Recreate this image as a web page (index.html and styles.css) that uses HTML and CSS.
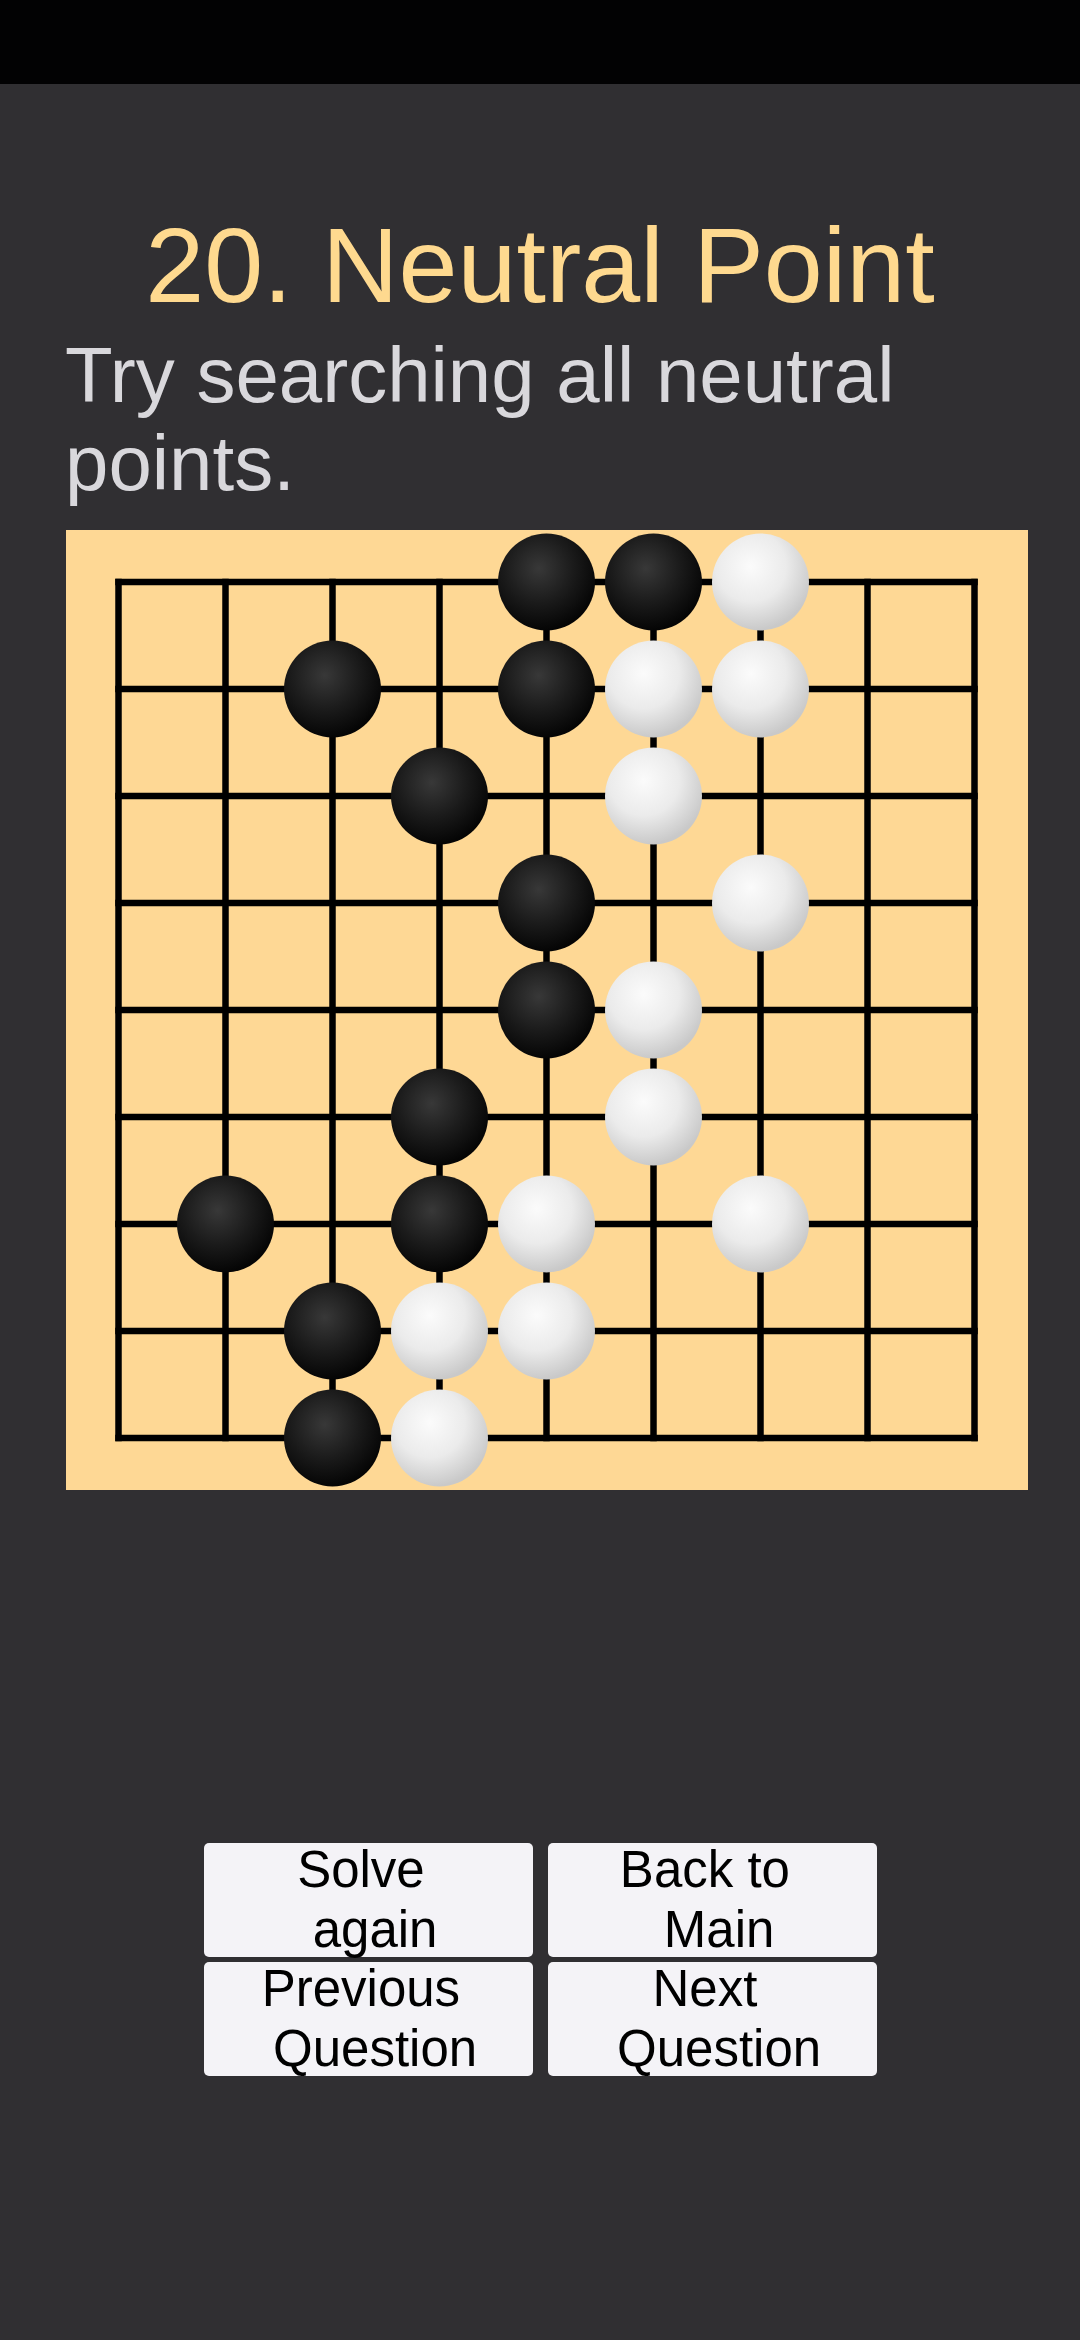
FILE: index.html
```html
<!DOCTYPE html>
<html lang="en">
<head>
<meta charset="utf-8">
<title>20. Neutral Point</title>
<link rel="stylesheet" href="styles.css">
</head>
<body>
<div class="statusbar"></div>
<main class="screen">
  <h1 class="title">20. Neutral Point</h1>
  <p class="desc">Try searching all neutral points.</p>
  <div class="board">
    <svg class="board-svg" viewBox="0 0 962 960" width="962" height="960" xmlns="http://www.w3.org/2000/svg">
      <defs>
        <radialGradient id="gb" cx="42%" cy="36%" r="64%">
          <stop offset="0" stop-color="#383838"/>
          <stop offset="0.55" stop-color="#1b1b1b"/>
          <stop offset="1" stop-color="#050505"/>
        </radialGradient>
        <radialGradient id="gw" cx="40%" cy="34%" r="66%">
          <stop offset="0" stop-color="#fbfbfb"/>
          <stop offset="0.55" stop-color="#ebebeb"/>
          <stop offset="1" stop-color="#c9c9c9"/>
        </radialGradient>
      </defs>
      <g stroke="#000" stroke-width="6.5" stroke-linecap="square">
        <line x1="52.5" y1="52" x2="52.5" y2="908"/>
        <line x1="159.5" y1="52" x2="159.5" y2="908"/>
        <line x1="266.5" y1="52" x2="266.5" y2="908"/>
        <line x1="373.5" y1="52" x2="373.5" y2="908"/>
        <line x1="480.5" y1="52" x2="480.5" y2="908"/>
        <line x1="587.5" y1="52" x2="587.5" y2="908"/>
        <line x1="694.5" y1="52" x2="694.5" y2="908"/>
        <line x1="801.5" y1="52" x2="801.5" y2="908"/>
        <line x1="908.5" y1="52" x2="908.5" y2="908"/>
        <line x1="52.5" y1="52" x2="908.5" y2="52"/>
        <line x1="52.5" y1="159" x2="908.5" y2="159"/>
        <line x1="52.5" y1="266" x2="908.5" y2="266"/>
        <line x1="52.5" y1="373" x2="908.5" y2="373"/>
        <line x1="52.5" y1="480" x2="908.5" y2="480"/>
        <line x1="52.5" y1="587" x2="908.5" y2="587"/>
        <line x1="52.5" y1="694" x2="908.5" y2="694"/>
        <line x1="52.5" y1="801" x2="908.5" y2="801"/>
        <line x1="52.5" y1="908" x2="908.5" y2="908"/>
      </g>
      <g class="black" fill="url(#gb)">
        <circle cx="480.5" cy="52" r="48.5"/>
        <circle cx="587.5" cy="52" r="48.5"/>
        <circle cx="266.5" cy="159" r="48.5"/>
        <circle cx="480.5" cy="159" r="48.5"/>
        <circle cx="373.5" cy="266" r="48.5"/>
        <circle cx="480.5" cy="373" r="48.5"/>
        <circle cx="480.5" cy="480" r="48.5"/>
        <circle cx="373.5" cy="587" r="48.5"/>
        <circle cx="159.5" cy="694" r="48.5"/>
        <circle cx="373.5" cy="694" r="48.5"/>
        <circle cx="266.5" cy="801" r="48.5"/>
        <circle cx="266.5" cy="908" r="48.5"/>
      </g>
      <g class="white" fill="url(#gw)">
        <circle cx="694.5" cy="52" r="48.5"/>
        <circle cx="587.5" cy="159" r="48.5"/>
        <circle cx="694.5" cy="159" r="48.5"/>
        <circle cx="587.5" cy="266" r="48.5"/>
        <circle cx="694.5" cy="373" r="48.5"/>
        <circle cx="587.5" cy="480" r="48.5"/>
        <circle cx="587.5" cy="587" r="48.5"/>
        <circle cx="480.5" cy="694" r="48.5"/>
        <circle cx="694.5" cy="694" r="48.5"/>
        <circle cx="373.5" cy="801" r="48.5"/>
        <circle cx="480.5" cy="801" r="48.5"/>
        <circle cx="373.5" cy="908" r="48.5"/>
      </g>
    </svg>
  </div>
  <div class="actions">
    <button class="btn"><span class="label">Solve&nbsp;<br>&nbsp;again</span></button>
    <button class="btn"><span class="label">Back to&nbsp;<br>&nbsp;Main</span></button>
    <button class="btn"><span class="label">Previous&nbsp;<br>&nbsp;Question</span></button>
    <button class="btn"><span class="label">Next&nbsp;<br>&nbsp;Question</span></button>
  </div>
</main>
</body>
</html>
```

FILE: styles.css
```css
html {
  background: #302f32;
}

body {
  margin: 0;
  width: 1080px;
  min-height: 2340px;
  background: #302f32;
  font-family: "Liberation Sans", Arial, sans-serif;
}

.statusbar {
  height: 84px;
  background: #020203;
}

.screen {
  display: flex;
  flex-direction: column;
}

.title {
  margin: 121px 0 0;
  font-size: 106px;
  line-height: 120px;
  font-weight: 400;
  color: #fed98f;
  text-align: center;
}

.desc {
  margin: 6px 0 0;
  padding: 0 52px 0 65px;
  font-size: 78px;
  line-height: 88px;
  color: #d9d8dc;
}

.board {
  margin: 23px 0 0 66px;
  width: 962px;
  height: 960px;
  background: #fed895;
}

.board-svg {
  display: block;
}

.actions {
  margin: 353px auto 0;
  display: grid;
  grid-template-columns: 329px 329px;
  grid-auto-rows: 114px;
  column-gap: 15px;
  row-gap: 5px;
}

.btn {
  display: flex;
  align-items: center;
  justify-content: center;
  padding: 0;
  border: none;
  border-radius: 5px;
  background: #f4f3f7;
  color: #000;
  font-family: "Liberation Sans", Arial, sans-serif;
  font-size: 51px;
  line-height: 60px;
  overflow: visible;
}

.label {
  display: block;
  text-align: center;
  white-space: nowrap;
}
```
